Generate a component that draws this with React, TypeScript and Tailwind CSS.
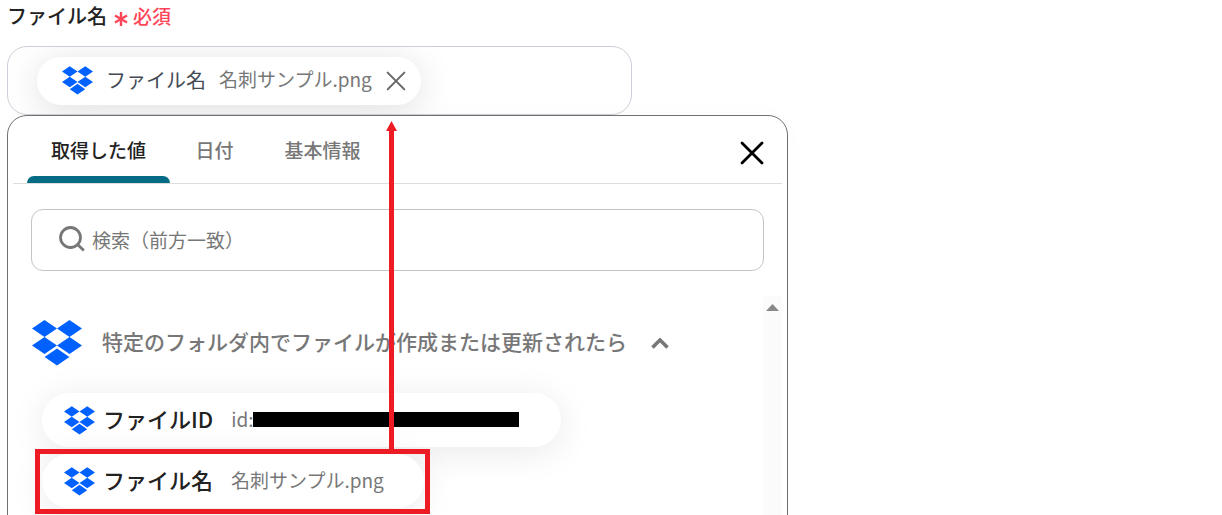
import type { ReactNode } from "react";

function Dropbox({ className }: { className: string }) {
  return (
    <svg viewBox="0 0 50 46" className={className} fill="#0061ff" aria-hidden="true">
      <path d="M12.5 0 25 8.5 12.5 17 0 8.5zM37.5 0 50 8.5 37.5 17 25 8.5zM12.5 17 25 25.5 12.5 34 0 25.5zM37.5 17 50 25.5 37.5 34 25 25.5zM25 28.4 37.4 37 25 45.6 12.6 37z" />
    </svg>
  );
}

function Cross({ className }: { className: string }) {
  return (
    <svg viewBox="0 0 24 24" className={className} fill="none" stroke="currentColor" strokeLinecap="round" aria-hidden="true">
      <path d="M2 2 22 22M22 2 2 22" />
    </svg>
  );
}

function ValueItem({ name, children }: { name: string; children: ReactNode }) {
  return (
    <button
      type="button"
      className="flex h-[54px] items-center rounded-full bg-white pl-[22px] shadow-[0_5px_36px_rgba(0,0,0,0.09)]"
    >
      <Dropbox className="h-[29px] w-[31px] shrink-0" />
      <span className="ml-2 pb-1 text-[22px] leading-8 font-medium whitespace-nowrap text-[#222]">{name}</span>
      {children}
    </button>
  );
}

export default function App() {
  return (
    <main className="relative h-screen overflow-hidden bg-white pl-[7px] font-['Noto_Sans_CJK_JP',sans-serif]">
      <div className="flex h-[46px] items-start gap-[7px] pt-[2px]">
        <h1 className="text-[20px] leading-7 font-medium text-[#222]">ファイル名</h1>
        <p className="flex items-center gap-[5px] pt-[1px] text-[19px] leading-[26px] font-medium text-[#ff4658]">
          <svg viewBox="0 0 14 16" className="mt-[5px] h-4 w-[14px]" fill="none" stroke="currentColor" strokeWidth="2.4" aria-hidden="true">
            <path d="M7 1v14M1 4.5l12 7M13 4.5l-12 7" />
          </svg>
          必須
        </p>
      </div>

      <div className="flex h-[69px] w-full max-w-[625px] items-center overflow-hidden rounded-[20px] border border-[#cbd0d8] pl-[29px]">
        <div className="flex h-12 items-center rounded-full bg-white pr-[15px] pl-[25px] shadow-[0_5px_36px_rgba(0,0,0,0.13)]">
          <Dropbox className="h-[29px] w-[31px] shrink-0" />
          <span className="ml-[13px] pb-[2px] text-[20px] leading-8 whitespace-nowrap text-[#444b55]">ファイル名</span>
          <span className="ml-[13px] pb-1 text-[19px] leading-8 whitespace-nowrap text-[#777]">名刺サンプル.png</span>
          <button type="button" aria-label="削除" className="ml-[14px] text-[#666]">
            <Cross className="block h-5 w-5 stroke-[2.4]" />
          </button>
        </div>
      </div>

      <section className="relative h-[520px] w-full max-w-[781px] rounded-[20px] border border-[#707070] bg-white px-[5px] shadow-[0_0_24px_rgba(0,0,0,0.02)]">
        <header className="flex h-[68px] items-stretch border-b border-[#ddd] pr-[18px] pl-[14px]">
          <nav className="flex flex-1 text-[19px] leading-7 font-medium text-[#777]">
            <button type="button" className="flex w-[143px] flex-col items-center justify-between pt-5 text-[#222]">
              取得した値
              <span className="h-[7px] w-full rounded-t-[7px] bg-[#066b85]" />
            </button>
            <button type="button" className="flex w-[89px] justify-center pt-5">日付</button>
            <button type="button" className="flex w-[127px] justify-center pt-5">基本情報</button>
          </nav>
          <button type="button" aria-label="閉じる" className="mt-[6px] text-black">
            <Cross className="block h-6 w-6 stroke-[2.8]" />
          </button>
        </header>

        <label className="mx-[18px] mt-[25px] flex h-[62px] items-center rounded-[12px] border border-[#c4c4c4] pl-[27px]">
          <svg viewBox="0 0 26 26" className="mb-[2px] h-[26px] w-[26px] shrink-0" fill="none" stroke="#777" strokeWidth="2.8" aria-hidden="true">
            <circle cx="11.5" cy="11.5" r="10" />
            <path d="m18.6 18.6 6.2 6" />
          </svg>
          <input
            type="text"
            aria-label="検索"
            placeholder="検索（前方一致）"
            className="ml-[7px] h-10 min-w-0 flex-1 bg-transparent pb-[2px] text-[19px] leading-7 outline-none placeholder:text-[#777] placeholder:opacity-100"
          />
        </label>

        <div className="mt-[25px] flex h-[400px]">
          <div className="flex-1 pl-[18px]">
            <button type="button" className="mt-6 ml-px flex h-[46px] items-center">
              <Dropbox className="h-[46px] w-[50px] shrink-0" />
              <span className="ml-5 pb-[5px] text-[21px] leading-8 font-medium whitespace-nowrap text-[#777]">
                特定のフォルダ内でファイルが作成または更新されたら
              </span>
              <svg viewBox="0 0 18 12" className="ml-6 h-3 w-[18px]" fill="none" stroke="#777" strokeWidth="3.6" aria-hidden="true">
                <path d="m1.5 10.5 7.5-7.5 7.5 7.5" />
              </svg>
            </button>
            <ul className="mt-[27px] flex flex-col items-start gap-[7px] pl-[11px]">
              <li>
                <ValueItem name="ファイルID">
                  <span className="mr-[42px] ml-[18px] flex items-center pb-[2px] text-[19px] leading-7 text-[#777]">
                    id:
                    <span className="h-[15px] w-[266px] bg-black" />
                  </span>
                </ValueItem>
              </li>
              <li className="relative">
                <ValueItem name="ファイル名">
                  <span className="mr-10 ml-[18px] pb-[2px] text-[19px] leading-7 whitespace-nowrap text-[#777]">名刺サンプル.png</span>
                </ValueItem>
                <div className="pointer-events-none absolute -top-[5px] -right-[6px] -left-[7px] h-[65px] border-[5px] border-[#ed1c24]" />
              </li>
            </ul>
          </div>
          <div className="flex w-[19px] justify-center bg-[#fbfbfb] pt-2">
            <svg viewBox="0 0 13 7" className="h-[7px] w-[13px]" fill="#888" aria-hidden="true">
              <path d="M0 7 6.5 0 13 7z" />
            </svg>
          </div>
        </div>
      </section>

      <svg viewBox="0 0 11 329" className="pointer-events-none absolute top-[121px] left-[386px] h-[329px] w-[11px]" fill="#ed1c24" aria-hidden="true">
        <path d="M5.5 0 11 10H8v319H3V10H0z" />
      </svg>
    </main>
  );
}
